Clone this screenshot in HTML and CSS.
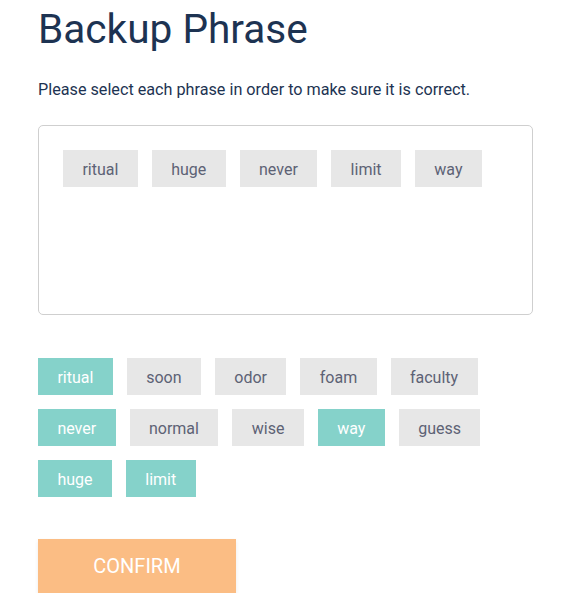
FILE: index.html
```html
<!DOCTYPE html>
<html>
<head>
<meta charset="utf-8">
<link rel="stylesheet" href="styles.css">
</head>
<body>
<div class="page">
  <h1 class="title">Backup Phrase</h1>
  <p class="subtitle">Please select each phrase in order to make sure it is correct.</p>
  <div class="selected-box">
    <span class="chip">ritual</span>
    <span class="chip">huge</span>
    <span class="chip">never</span>
    <span class="chip">limit</span>
    <span class="chip">way</span>
  </div>
  <div class="word-pool">
    <span class="chip chip-active">ritual</span>
    <span class="chip">soon</span>
    <span class="chip">odor</span>
    <span class="chip">foam</span>
    <span class="chip">faculty</span>
    <span class="chip chip-active">never</span>
    <span class="chip">normal</span>
    <span class="chip">wise</span>
    <span class="chip chip-active">way</span>
    <span class="chip">guess</span>
    <span class="chip chip-active">huge</span>
    <span class="chip chip-active">limit</span>
  </div>
  <button class="confirm">CONFIRM</button>
</div>
</body>
</html>
```
FILE: styles.css
```css
html, body {
  margin: 0;
  padding: 0;
  background: #ffffff;
}
body {
  font-family: Roboto, "Liberation Sans", sans-serif;
}
.page {
  padding: 0 39px 0 38px;
}
.title {
  margin: 0;
  padding-top: 6px;
  font-size: 40.6px;
  font-weight: 400;
  line-height: 47px;
  color: #1d3352;
}
.subtitle {
  margin: 27px 0 0;
  font-size: 16.2px;
  line-height: 20px;
  color: #1d3352;
}
.selected-box {
  margin-top: 25px;
  height: 190px;
  box-sizing: border-box;
  border: 1px solid #cfcfcf;
  border-radius: 5px;
  padding: 24px;
  display: flex;
  flex-wrap: wrap;
  align-content: flex-start;
  gap: 14px;
}
.chip {
  display: inline-flex;
  align-items: center;
  height: 37px;
  padding: 1px 19.4px 0;
  box-sizing: border-box;
  background: #e7e7e7;
  color: #5d6275;
  font-size: 16px;
}
.chip-active {
  background: #85d2ca;
  color: #ffffff;
}
.word-pool {
  margin-top: 43px;
  display: flex;
  flex-wrap: wrap;
  gap: 14px;
}
.confirm {
  margin-top: 42px;
  width: 198px;
  height: 54px;
  border: none;
  background: #fbbd84;
  color: #ffffff;
  font-family: Roboto, "Liberation Sans", sans-serif;
  font-size: 20px;
  box-shadow: 0 2px 4px rgba(0, 0, 0, 0.08);
  padding: 0;
}
```
